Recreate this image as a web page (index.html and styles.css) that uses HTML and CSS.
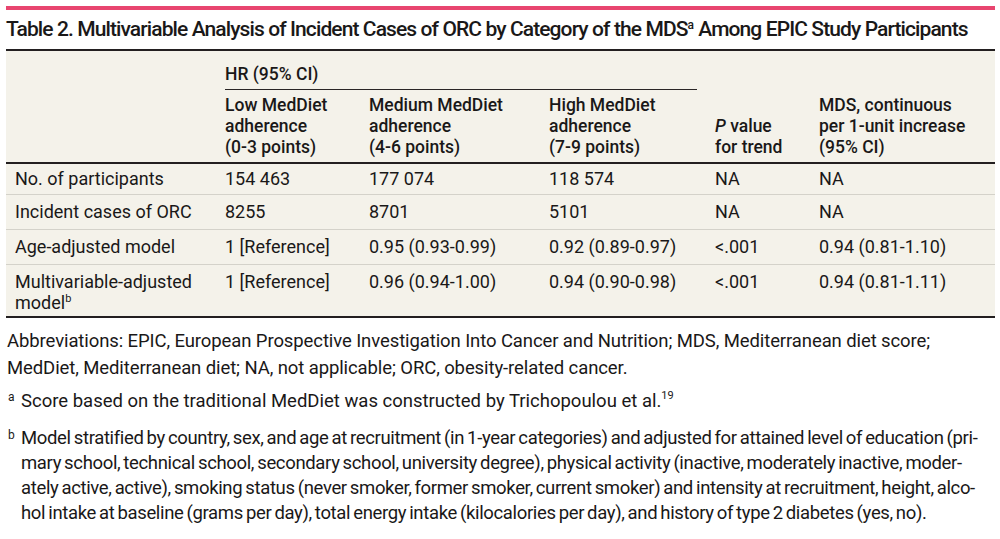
FILE: index.html
```html
<!DOCTYPE html>
<html lang="en">
<head>
<meta charset="utf-8">
<title>Table 2</title>
<link rel="stylesheet" href="styles.css">
</head>
<body>
<div class="page">
  <div class="accent"></div>
  <h1 class="title">Table 2. Multivariable Analysis of Incident Cases of ORC by Category of the MDS<sup>a</sup> Among EPIC Study Participants</h1>
  <table class="data">
    <colgroup>
      <col class="w-label">
      <col class="w-low">
      <col class="w-med">
      <col class="w-high">
      <col class="w-p">
      <col class="w-mds">
    </colgroup>
    <thead>
      <tr class="group-row">
        <th class="label" rowspan="2"></th>
        <th class="group" colspan="3"><span class="group-name">HR (95% CI)</span></th>
        <th class="tall" rowspan="2"><i>P</i> value<br>for trend</th>
        <th class="tall" rowspan="2">MDS, continuous<br>per 1-unit increase<br>(95% CI)</th>
      </tr>
      <tr class="sub-row">
        <th>Low MedDiet<br>adherence<br>(0-3 points)</th>
        <th>Medium MedDiet<br>adherence<br>(4-6 points)</th>
        <th>High MedDiet<br>adherence<br>(7-9 points)</th>
      </tr>
    </thead>
    <tbody>
      <tr class="first">
        <td class="label">No. of participants</td>
        <td>154 463</td>
        <td>177 074</td>
        <td>118 574</td>
        <td>NA</td>
        <td>NA</td>
      </tr>
      <tr>
        <td class="label">Incident cases of ORC</td>
        <td>8255</td>
        <td>8701</td>
        <td>5101</td>
        <td>NA</td>
        <td>NA</td>
      </tr>
      <tr>
        <td class="label">Age-adjusted model</td>
        <td>1 [Reference]</td>
        <td>0.95 (0.93-0.99)</td>
        <td>0.92 (0.89-0.97)</td>
        <td>&lt;.001</td>
        <td>0.94 (0.81-1.10)</td>
      </tr>
      <tr class="last">
        <td class="label">Multivariable-adjusted<br>model<sup>b</sup></td>
        <td>1 [Reference]</td>
        <td>0.96 (0.94-1.00)</td>
        <td>0.94 (0.90-0.98)</td>
        <td>&lt;.001</td>
        <td>0.94 (0.81-1.11)</td>
      </tr>
    </tbody>
  </table>
  <div class="notes">
    <p class="abbr">Abbreviations: EPIC, European Prospective Investigation Into Cancer and Nutrition; MDS, Mediterranean diet score;<br>MedDiet, Mediterranean diet; NA, not applicable; ORC, obesity-related cancer.</p>
    <p class="fn fn-a"><span class="mark">a</span><span class="fn-text">Score based on the traditional MedDiet was constructed by Trichopoulou et al.<sup>19</sup></span></p>
    <p class="fn fn-tight"><span class="mark">b</span><span class="fn-text">Model stratified by country, sex, and age at recruitment (in 1-year categories) and adjusted for attained level of education (pri-<br>mary school, technical school, secondary school, university degree), physical activity (inactive, moderately inactive, moder-<br>ately active, active), smoking status (never smoker, former smoker, current smoker) and intensity at recruitment, height, alco-<br>hol intake at baseline (grams per day), total energy intake (kilocalories per day), and history of type 2 diabetes (yes, no).</span></p>
  </div>
</div>
</body>
</html>
```

FILE: styles.css
```css
html, body {
  margin: 0;
  padding: 0;
  background: #ffffff;
}

.page {
  padding: 6px 5px 0 6px;
  width: 989px;
  color: #1a1818;
  font-family: Roboto, "Liberation Sans", sans-serif;
}

.accent {
  height: 4px;
  background: #e8456f;
}

.title {
  margin: 6px 0 7px 0;
  font-size: 21px;
  line-height: 26px;
  font-weight: 500;
  letter-spacing: -0.9px;
  white-space: nowrap;
}

.title sup {
  font-size: 12px;
  line-height: 0;
  vertical-align: 7px;
  letter-spacing: 0;
}

.data {
  width: 989px;
  table-layout: fixed;
  border-collapse: collapse;
  background: #f4f2ea;
  border-top: 2px solid #231f20;
  border-bottom: 2px solid #231f20;
  font-size: 18px;
  line-height: 21px;
}

.w-label { width: 219px; }
.w-low { width: 144px; }
.w-med { width: 180px; }
.w-high { width: 166px; }
.w-p { width: 104px; }
.w-mds { width: 176px; }

.data th,
.data td {
  text-align: left;
  padding: 0 8px 0 0;
  white-space: nowrap;
}

.data .label {
  padding-left: 9px;
}

.data th {
  font-size: 17.5px;
  font-weight: 500;
  vertical-align: bottom;
}

.data th i {
  font-style: italic;
}

.group-row th {
  padding-top: 13px;
}

.data th.group {
  padding-right: 0;
}

.group-name {
  display: block;
  margin-right: 18px;
  padding-bottom: 4px;
  border-bottom: 1px solid #2a2626;
}

.sub-row th {
  padding-top: 5px;
  padding-bottom: 4px;
}

.data th.tall {
  padding-bottom: 4px;
}

.data thead {
  border-bottom: 2px solid #231f20;
}

.data tbody tr {
  border-bottom: 1px solid #d4d2ca;
}

.data td {
  padding-top: 6px;
  padding-bottom: 7px;
  vertical-align: top;
}

.data tr.first td {
  padding-top: 4px;
  padding-bottom: 5px;
}

.data tr.last td {
  padding-top: 6px;
  padding-bottom: 3px;
}

.data td sup {
  font-size: 11px;
  line-height: 0;
  vertical-align: 7px;
}

.notes {
  padding-top: 10px;
  font-size: 18.5px;
  line-height: 26px;
  letter-spacing: 0;
}

.notes p {
  margin: 0;
}

.notes .abbr {
  padding-left: 1px;
  line-height: 27px;
  letter-spacing: -0.1px;
  margin-bottom: 6px;
}

.notes .fn-a {
  margin-bottom: 12px;
}

.fn {
  display: flex;
}

.mark {
  flex: 0 0 13px;
  padding-left: 2px;
  font-size: 12px;
  line-height: 18px;
}

.fn-text {
  flex: 1;
  white-space: nowrap;
}

.fn-text sup {
  font-size: 11px;
  line-height: 0;
  vertical-align: 8px;
}

.notes .fn-tight {
  line-height: 25px;
}

.fn-tight .fn-text {
  letter-spacing: -0.35px;
  word-spacing: -1.2px;
}
```
